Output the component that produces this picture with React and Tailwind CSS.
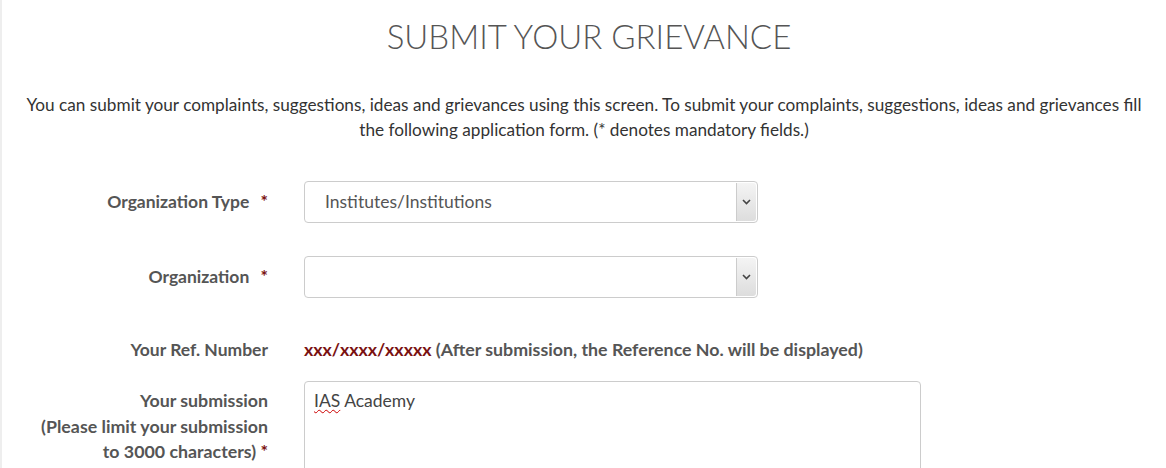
export default function App() {
  return (
    <div className="min-h-[468px] bg-white border-l-2 border-[#eeeeee] font-['Lato',sans-serif] text-[#333]">
      <h1 className="pt-[16px] pl-[10px] text-center text-[33px] font-light leading-[40px] text-[#555]">
        SUBMIT YOUR GRIEVANCE
      </h1>

      <p className="mt-[36px] px-[14px] text-center text-[17.2px] leading-[25px] text-[#333]">
        You can submit your complaints, suggestions, ideas and grievances using this screen. To submit your complaints, suggestions, ideas and grievances fill
        the following application form. (* denotes mandatory fields.)
      </p>

      <form className="mt-[39px]">
        {/* Organization Type */}
        <div className="flex items-center">
          <label className="w-[266px] text-right text-[17.5px] font-bold text-[#555]">
            Organization Type <span className="ml-[7px] text-[#7a1111]">*</span>
          </label>
          <div className="ml-[36px] flex h-[42px] w-[454px] items-center rounded border border-[#cccccc] bg-white pl-[20px] pr-[1px]">
            <span className="flex-1 text-[17.5px] text-[#555]">Institutes/Institutions</span>
            <SelectArrow />
          </div>
        </div>

        {/* Organization */}
        <div className="mt-[33px] flex items-center">
          <label className="w-[266px] text-right text-[17.5px] font-bold text-[#555]">
            Organization <span className="ml-[7px] text-[#7a1111]">*</span>
          </label>
          <div className="ml-[36px] flex h-[42px] w-[454px] items-center rounded border border-[#cccccc] bg-white pl-[20px] pr-[1px]">
            <span className="flex-1" />
            <SelectArrow />
          </div>
        </div>

        {/* Ref number */}
        <div className="mt-[39px] flex items-center leading-[25px]">
          <label className="w-[266px] text-right text-[17.5px] font-bold text-[#555]">Your Ref. Number</label>
          <div className="ml-[36px] text-[17.8px] font-bold text-[#555]">
            <span className="text-[#7a1111]">xxx/xxxx/xxxxx</span> (After submission, the Reference No. will be displayed)
          </div>
        </div>

        {/* Submission */}
        <div className="mt-[19px] flex items-start">
          <label className="w-[266px] pt-[7px] text-right text-[17.8px] font-bold leading-[25.5px] text-[#555]">
            Your submission<br />
            (Please limit your submission<br />
            to 3000 characters) <span className="text-[#7a1111]">*</span>
          </label>
          <div className="ml-[36px] h-[120px] w-[617px] rounded border border-[#cccccc] bg-white px-[9px] pt-[6px] text-[17.5px] text-[#444]">
            <span className="underline decoration-wavy decoration-[#cc0000] decoration-1 underline-offset-2">IAS</span> Academy
          </div>
        </div>
      </form>
    </div>
  )
}

function SelectArrow() {
  return (
    <div className="flex h-[38px] w-[20px] items-center justify-center border-l border-[#cccccc] bg-gradient-to-b from-[#f4f4f4] to-[#dddddd] rounded-r-[3px]">
      <svg width="9" height="6" viewBox="0 0 9 6">
        <path d="M1 1 L4.5 4.5 L8 1" fill="none" stroke="#444" strokeWidth="1.6" />
      </svg>
    </div>
  )
}
